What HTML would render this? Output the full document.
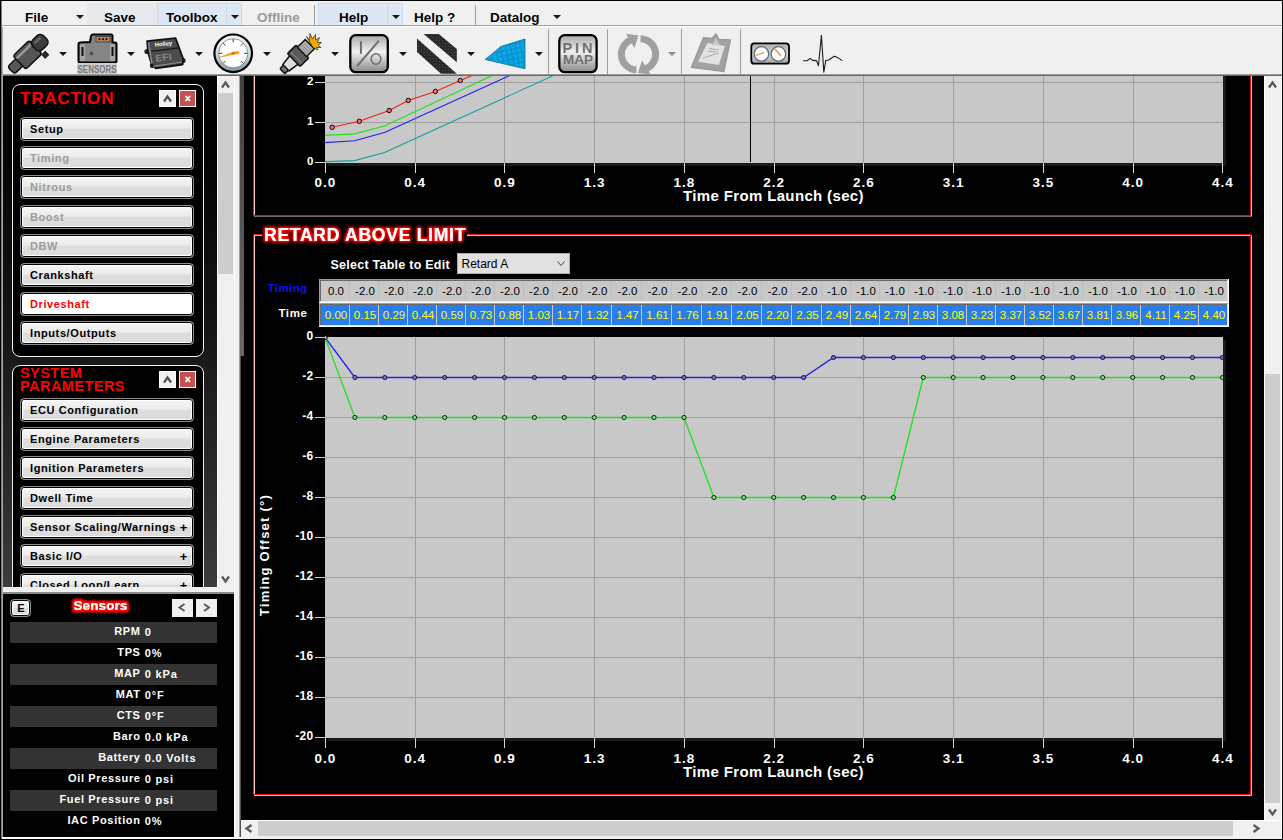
<!DOCTYPE html><html><head><meta charset="utf-8"><style>
*{margin:0;padding:0;box-sizing:border-box}
html,body{width:1283px;height:840px;overflow:hidden;background:#f0f0f0;font-family:"Liberation Sans",sans-serif}
.a{position:absolute}
.mt{position:absolute;top:10px;font-size:13.5px;font-weight:bold;color:#000;line-height:16px;white-space:nowrap}
.dd{position:absolute;width:0;height:0;border-left:4px solid transparent;border-right:4px solid transparent;border-top:4px solid #1a1a1a}
.btn{position:absolute;left:20px;width:174px;height:24px;border-radius:4px;border:1px solid #8c8c8c;
 background:linear-gradient(#f6f6f6 0%,#ececec 45%,#dddddd 52%,#dcdcdc 100%);box-shadow:inset 0 0 0 1px #000,inset 0 0 0 2px #fff;
 font-size:11px;font-weight:bold;color:#000;line-height:23px;padding-left:9px;white-space:nowrap;letter-spacing:0.6px}
.btn.dis{color:#9c9c9c}
.btn.sel{background:#fff;color:#f00}
.btn .pl{position:absolute;right:5px;top:0;font-size:13px}
.sr{position:absolute;left:10px;width:207px;height:21px;font-size:11px;font-weight:bold;color:#fff;line-height:21px;white-space:nowrap;letter-spacing:0.8px}
.sr.g{background:#333}
.sr .l{position:absolute;right:76.4px;top:-1.5px;text-align:right;letter-spacing:0.65px}
.sr .v{position:absolute;left:134.8px;top:0px}
</style></head><body>
<div class="a" style="left:0;top:0;width:1283px;height:1px;background:#000"></div>
<div class="a" style="left:0;top:0;width:1px;height:840px;background:#000"></div>
<div class="a" style="left:1px;top:1px;width:1px;height:839px;background:#2f8be0"></div>
<div class="a" style="left:1282px;top:0;width:1px;height:840px;background:#000"></div>
<div class="a" style="left:0;top:839px;width:1283px;height:1px;background:#000"></div>
<div class="a" style="left:2px;top:25px;width:1280px;height:1px;background:#a0a0a0"></div>
<div class="a" style="left:2px;top:26px;width:1280px;height:1px;background:#fff"></div>
<div class="a" style="left:87px;top:3px;width:70px;height:22px;background:#e6eaef"></div>
<div class="a" style="left:157px;top:3px;width:85px;height:22px;background:#dde8f4;border:1px solid #c6dcf0;border-bottom:none"></div>
<div class="a" style="left:226px;top:3px;width:1px;height:22px;background:#c6dcf0"></div>
<div class="a" style="left:318px;top:3px;width:85px;height:22px;background:#dde8f4;border:1px solid #c6dcf0;border-bottom:none"></div>
<div class="a" style="left:387px;top:3px;width:1px;height:22px;background:#c6dcf0"></div>
<div class="a" style="left:314px;top:5px;width:1px;height:20px;background:#a0a0a0"></div>
<div class="a" style="left:475px;top:5px;width:1px;height:20px;background:#a0a0a0"></div>
<div class="mt" style="left:25px;color:#000">File</div>
<div class="mt" style="left:104px;color:#000">Save</div>
<div class="mt" style="left:166px;color:#000">Toolbox</div>
<div class="mt" style="left:257px;color:#9a9a9a">Offline</div>
<div class="mt" style="left:339px;color:#000">Help</div>
<div class="mt" style="left:414px;color:#000">Help ?</div>
<div class="mt" style="left:490px;color:#000">Datalog</div>
<div class="dd" style="left:76px;top:15px"></div>
<div class="dd" style="left:231px;top:15px"></div>
<div class="dd" style="left:392px;top:15px"></div>
<div class="dd" style="left:553px;top:15px"></div>
<div class="a" style="left:2px;top:74px;width:1280px;height:1px;background:#9a9a9a"></div>
<div class="a" style="left:2px;top:75px;width:1280px;height:1px;background:#6a6a6a"></div>
<div class="dd" style="left:59px;top:52px;border-top-color:#1a1a1a"></div>
<div class="dd" style="left:127px;top:52px;border-top-color:#1a1a1a"></div>
<div class="dd" style="left:195px;top:52px;border-top-color:#1a1a1a"></div>
<div class="dd" style="left:263px;top:52px;border-top-color:#1a1a1a"></div>
<div class="dd" style="left:331px;top:52px;border-top-color:#1a1a1a"></div>
<div class="dd" style="left:399px;top:52px;border-top-color:#1a1a1a"></div>
<div class="dd" style="left:467px;top:52px;border-top-color:#1a1a1a"></div>
<div class="dd" style="left:535px;top:52px;border-top-color:#1a1a1a"></div>
<div class="dd" style="left:668px;top:52px;border-top-color:#8a8a8a"></div>
<div class="a" style="left:548px;top:29px;width:1px;height:45px;background:#a0a0a0"></div>
<div class="a" style="left:607px;top:29px;width:1px;height:45px;background:#a0a0a0"></div>
<div class="a" style="left:681px;top:29px;width:1px;height:45px;background:#a0a0a0"></div>
<div class="a" style="left:740px;top:29px;width:1px;height:45px;background:#a0a0a0"></div>
<svg class="a" style="left:0;top:27px" width="860" height="47" viewBox="0 27 860 47" font-family="Liberation Sans, sans-serif">
<defs>
<linearGradient id="gbtn" x1="0" y1="0" x2="0" y2="1"><stop offset="0" stop-color="#a8a8a8"/><stop offset="0.45" stop-color="#f2f2f2"/><stop offset="1" stop-color="#8a8a8a"/></linearGradient>
<linearGradient id="gbez" x1="0" y1="0" x2="0" y2="1"><stop offset="0" stop-color="#f4f6f7"/><stop offset="0.55" stop-color="#c9d6dc"/><stop offset="1" stop-color="#7d98a5"/></linearGradient>
<linearGradient id="gdual" x1="0" y1="0" x2="0" y2="1"><stop offset="0" stop-color="#a9abae"/><stop offset="0.5" stop-color="#d8d9da"/><stop offset="1" stop-color="#a0a2a4"/></linearGradient>
<pattern id="dots" width="3" height="3" patternUnits="userSpaceOnUse"><rect width="3" height="3" fill="#2a2a2a"/><rect x="1" y="1" width="1" height="1" fill="#4a4a4a"/></pattern>
<pattern id="bgrid" width="5" height="5" patternUnits="userSpaceOnUse" patternTransform="rotate(-12)"><rect width="5" height="5" fill="#0aa6e6"/><path d="M0,4.5H5M4.5,0V5" stroke="#0785bb" stroke-width="0.8"/></pattern>
</defs>
<g transform="translate(39.8,41.2) rotate(-44)" stroke="#111" stroke-width="1.5">
<rect x="-9" y="10" width="7" height="7" fill="#2a2a2a" stroke="#fff" stroke-width="1"/>
<rect x="-41" y="-4" width="13.5" height="10" rx="3" fill="#585858"/>
<rect x="-29.5" y="-8" width="22.5" height="18.5" rx="2.5" fill="#555"/>
<rect x="-28.5" y="-5" width="20" height="2.5" fill="#9a9a9a" stroke="none"/>
<rect x="-8.5" y="-5.8" width="15" height="13.6" rx="4.5" fill="#3c3c3c"/>
<rect x="-5" y="-3.5" width="8" height="2.5" fill="#6a6a6a" stroke="none"/>
</g>
<path d="M78.5,44 Q78.5,42.5 80,42.5 L90,42 L91,36 Q91.5,34.5 93,34.5 L111,34.5 Q112.5,34.5 112.5,36 L112.5,42.5 L115,42.5 Q116.5,42.5 116.5,44 L116.5,61 Q116.5,62.5 115,62.5 L80,62.5 Q78.5,62.5 78.5,61 Z" fill="#858585" stroke="#000" stroke-width="2"/>
<rect x="80" y="44" width="5" height="17" fill="#a4a4a4"/><rect x="110" y="44" width="5" height="17" fill="#a4a4a4"/>
<rect x="81.5" y="47" width="2" height="9" fill="#111"/><rect x="111.5" y="47" width="2" height="9" fill="#111"/>
<rect x="96" y="36.5" width="14" height="5.5" fill="#c8824a" stroke="#333" stroke-width="0.8"/>
<circle cx="99.5" cy="39.2" r="1.1" fill="#111"/><circle cx="103" cy="39.2" r="1.1" fill="#111"/><circle cx="106.5" cy="39.2" r="1.1" fill="#111"/>
<ellipse cx="91.5" cy="53.5" rx="1.5" ry="2" fill="#444"/>
<rect x="77" y="63" width="40" height="11" fill="#cdcdcd"/>
<text x="77.5" y="72.8" fill="#777" font-size="10" font-weight="bold" textLength="39" lengthAdjust="spacingAndGlyphs">SENSORS</text>
<circle cx="147" cy="51.5" r="2.6" fill="#222"/><circle cx="152.5" cy="65.5" r="2.6" fill="#222"/><circle cx="183" cy="60.5" r="2.6" fill="#222"/>
<path d="M147.1,41.2 L175.6,38.2 L183.3,59 L182.7,64.5 L155.9,68.3 L151.5,64 L148.2,53 Z" fill="#4c4c4c" stroke="#111" stroke-width="1.8" stroke-linejoin="round"/>
<path d="M148.5,42.5 L151.8,63.5" stroke="#8a8a8a" stroke-width="1.6"/>
<path d="M151.5,51.4 L178,48" stroke="#1a1a1a" stroke-width="1.3"/>
<path d="M153,66.3 L182,62" stroke="#8c8c8c" stroke-width="1.2"/>
<text transform="translate(155,46.8) rotate(-6)" fill="#fff" font-size="5.8" font-weight="bold">Holley</text>
<text transform="translate(156,61.8) rotate(-8)" fill="#8a8a8a" font-size="9.5" font-weight="bold" letter-spacing="0.6">EFI</text>
<circle cx="233.2" cy="53.3" r="18.8" fill="url(#gbez)" stroke="#000" stroke-width="2.2"/>
<circle cx="233.2" cy="53.3" r="14.6" fill="#fff" stroke="#555" stroke-width="0.6"/>
<line x1="223.2" y1="63.3" x2="225.4" y2="61.1" stroke="#333" stroke-width="1"/>
<line x1="219.0" y1="53.3" x2="222.2" y2="53.3" stroke="#333" stroke-width="1"/>
<line x1="223.2" y1="43.3" x2="225.4" y2="45.5" stroke="#333" stroke-width="1"/>
<line x1="233.2" y1="39.1" x2="233.2" y2="42.3" stroke="#333" stroke-width="1"/>
<line x1="243.2" y1="43.3" x2="241.0" y2="45.5" stroke="#333" stroke-width="1"/>
<line x1="247.4" y1="53.3" x2="244.2" y2="53.3" stroke="#333" stroke-width="1"/>
<line x1="243.2" y1="63.3" x2="241.0" y2="61.1" stroke="#333" stroke-width="1"/>
<path d="M219.5,57.5 L233,52 L239,51.5 L239,53.5 L233,54.5 Z" fill="#f0a020" stroke="#f0a020" stroke-width="0.6"/>
<circle cx="233.2" cy="53.3" r="1.6" fill="#d08010"/>
<g transform="translate(283.1,70.5) rotate(-44.5)" stroke="#111" stroke-width="1.5">
<rect x="-1" y="-3.5" width="6" height="7" rx="1.5" fill="#777"/>
<path d="M4,-4.5 L16,-6 L16,6 L4,4.5 Z" fill="#dcdcdc"/>
<rect x="15" y="-9" width="12" height="18" rx="1" fill="#5a5a5a"/>
<line x1="18.5" y1="-8" x2="18.5" y2="8" stroke="#9a9a9a" stroke-width="0.8"/>
<rect x="26.5" y="-6.5" width="11" height="13" fill="#b4b4b4"/>
<path d="M29,-5 V5 M31.5,-5 V5 M34,-5 V5" stroke="#777" stroke-width="0.8"/>
</g>
<path d="M306.5,36.5 L309.5,40.5 L310,33.5 L312.5,39 L315.5,34.5 L315.5,40 L319.5,37.5 L317.5,42.5 L321.5,42.5 L318,45.5 L321,47.5 L316.5,47.5 L318,50 L313,47.5 Z" fill="#f5a800" stroke="#222" stroke-width="0.7" stroke-linejoin="round"/>
<rect x="350.3" y="35.2" width="37.5" height="37" rx="5.5" fill="url(#gbtn)" stroke="#000" stroke-width="2.3"/>
<rect x="359.9" y="41.2" width="2" height="12.6" fill="#6c6c6c"/>
<line x1="357.2" y1="66" x2="379" y2="40.6" stroke="#707070" stroke-width="2"/>
<ellipse cx="376" cy="59" rx="4.8" ry="5.3" fill="none" stroke="#6c6c6c" stroke-width="1.5"/>
<path d="M417,38.5 L456.8,73.7 L441,73.7 L417,52 Z" fill="url(#dots)"/>
<path d="M423.6,34 L438.8,34 L456.8,49 L456.8,62.2 Z" fill="url(#dots)"/>
<path d="M485.2,59.5 L501,46.4 L525,39 L525,68.8 Z" fill="url(#bgrid)" stroke="#0b6f9c" stroke-width="0.8"/>
<rect x="559.3" y="35.2" width="37.3" height="37" rx="5.5" fill="url(#gbtn)" stroke="#000" stroke-width="2.3"/>
<text x="579" y="52.5" fill="#707070" font-size="14.5" font-weight="bold" text-anchor="middle" letter-spacing="3">PIN</text>
<text x="578" y="63.8" fill="#707070" font-size="13.5" font-weight="bold" text-anchor="middle" letter-spacing="0">MAP</text>
<g fill="none" stroke="#a0a0a0" stroke-width="7">
<path d="M636.5,69.9 A15.6,15.6 0 0 1 634.5,38.9"/>
<path d="M640.5,38.7 A15.6,15.6 0 0 1 642.5,69.7"/>
</g>
<path d="M626,33.8 L638.5,35.5 L634.5,48 Z" fill="#a0a0a0"/>
<path d="M650.5,74.5 L638,73 L642,60.5 Z" fill="#a0a0a0"/>
<path d="M703.5,37.7 L712,38.5 L716,34 L719,39.5 L730.4,40.1 L723.8,71.6 L691.5,67.2 Z" fill="#a2a2a2" stroke="#9a9a9a" stroke-width="1.5" stroke-linejoin="round"/>
<path d="M707.4,43.1 L724.9,45.9 L718.9,65 L698,61.8 Z" fill="#e2e2e2"/>
<path d="M712,45 L716,37.5 L720,45.5 Z" fill="#c8c8c8"/>
<path d="M709,48.5 L719,50 M708,51 L716,52 M703,58 L719,53" stroke="#aaa" stroke-width="1"/>
<rect x="751.3" y="43.4" width="37.7" height="20.3" rx="3" fill="url(#gdual)" stroke="#000" stroke-width="1.8"/>
<circle cx="761.4" cy="53.9" r="7.3" fill="#fff" stroke="#5a6e78" stroke-width="1.3"/>
<circle cx="778.4" cy="53.9" r="7.3" fill="#fff" stroke="#5a6e78" stroke-width="1.3"/>
<line x1="755.5" y1="55.5" x2="764" y2="52.5" stroke="#e09020" stroke-width="1.2"/>
<line x1="774.5" y1="48.5" x2="781" y2="56" stroke="#e09020" stroke-width="1.2"/>
<polyline points="803.1,60.8 807.2,60.8 810,58.4 812.5,60.4 816.5,60.6 818.5,65.7 821.4,35.3 823.8,72.1 825.8,60.4 828.7,60 834.3,56.3 837.6,57.6 842.4,60.6" fill="none" stroke="#1a1a1a" stroke-width="1.1" stroke-linejoin="round"/>
</svg>
<div class="a" style="left:2px;top:27px;width:1px;height:812px;background:#a8a8a8"></div>
<div class="a" style="left:3px;top:76px;width:214px;height:511px;background:linear-gradient(#000 0%,#080808 25%,#151515 50%,#272727 75%,#3c3c3c 100%)"></div>
<div class="a" style="left:217px;top:76px;width:1px;height:511px;background:#fff"></div>
<div class="a" style="left:218px;top:76px;width:16px;height:511px;background:#f0f0f0"></div>
<div class="a" style="left:218px;top:93px;width:15px;height:181px;background:#cdcdcd"></div>
<!--LSCROLL-->
<div class="a" style="left:234px;top:76px;width:1px;height:761px;background:#fff"></div>
<div class="a" style="left:235px;top:76px;width:4px;height:761px;background:#f0f0f0"></div>
<div class="a" style="left:239px;top:76px;width:1px;height:763px;background:#a0a0a0"></div>
<div class="a" style="left:240px;top:76px;width:1px;height:763px;background:#505050"></div>
<div class="a" style="left:12px;top:84px;width:192px;height:273px;border:1px solid #f0f0f0;border-radius:8px;background:#000"></div>
<div class="a" style="left:20px;top:89px;font-size:17px;font-weight:bold;color:#f00;letter-spacing:0.8px;line-height:20px">TRACTION</div>
<div class="a" style="left:159px;top:90px;width:17px;height:17px;background:#f0f0f0;border:1px solid #fff"></div>
<div class="a" style="left:179px;top:90px;width:17px;height:17px;background:#c65050;border:1px solid #fff"></div>
<div class="btn " style="top:117px">Setup</div>
<div class="btn dis" style="top:146px">Timing</div>
<div class="btn dis" style="top:175px">Nitrous</div>
<div class="btn dis" style="top:205px">Boost</div>
<div class="btn dis" style="top:234px">DBW</div>
<div class="btn " style="top:263px">Crankshaft</div>
<div class="btn sel" style="top:292px">Driveshaft</div>
<div class="btn " style="top:321px">Inputs/Outputs</div>
<div class="a" style="left:3px;top:76px;width:214px;height:511px;overflow:hidden">
<div class="a" style="left:9px;top:289px;width:192px;height:300px;border:1px solid #f0f0f0;border-radius:8px;background:#000"></div>
<div class="a" style="left:17px;top:291px;font-size:14.5px;font-weight:bold;color:#f00;line-height:12.8px;letter-spacing:0.45px">SYSTEM<br>PARAMETERS</div>
<div class="a" style="left:156px;top:295px;width:17px;height:17px;background:#f0f0f0;border:1px solid #fff"></div>
<div class="a" style="left:176px;top:295px;width:17px;height:17px;background:#c65050;border:1px solid #fff"></div>
<div class="btn" style="left:17px;top:322px">ECU Configuration</div>
<div class="btn" style="left:17px;top:351px">Engine Parameters</div>
<div class="btn" style="left:17px;top:380px">Ignition Parameters</div>
<div class="btn" style="left:17px;top:410px">Dwell Time</div>
<div class="btn" style="left:17px;top:439px">Sensor Scaling/Warnings<span class="pl">+</span></div>
<div class="btn" style="left:17px;top:468px">Basic I/O<span class="pl">+</span></div>
<div class="btn" style="left:17px;top:497px">Closed Loop/Learn<span class="pl">+</span></div>
</div>
<div class="a" style="left:3px;top:587px;width:231px;height:5px;background:#f0f0f0"></div>
<div class="a" style="left:3px;top:592px;width:231px;height:2px;background:#8a8a8a"></div>
<div class="a" style="left:3px;top:594px;width:231px;height:243px;background:#000"></div>
<div class="a" style="left:2px;top:837px;width:239px;height:2px;background:#fff"></div>
<div class="a" style="left:10px;top:599px;width:21px;height:18px;border:1px solid #8c8c8c;border-radius:4px;background:linear-gradient(#f8f8f8,#e8e8e8 50%,#dcdcdc 52%,#dcdcdc);box-shadow:inset 0 0 0 1px #000,inset 0 0 0 2px #fff;font-size:11px;font-weight:bold;text-align:center;line-height:17px;padding-left:1px">E</div>
<svg class="a" style="left:60px;top:592px" width="90" height="26" viewBox="60 592 90 26"><defs><filter id="sg" x="-20%" y="-60%" width="140%" height="220%"><feMorphology operator="dilate" radius="1.5" in="SourceAlpha" result="d"/><feGaussianBlur in="d" stdDeviation="1.3" result="b"/><feFlood flood-color="#ff0000"/><feComposite in2="b" operator="in" result="r"/><feMerge><feMergeNode in="r"/><feMergeNode in="r"/><feMergeNode in="SourceGraphic"/></feMerge></filter></defs><text x="73.5" y="609.7" fill="#fff" font-family="Liberation Sans, sans-serif" font-size="13.5" font-weight="bold" letter-spacing="0.1" filter="url(#sg)">Sensors</text></svg>
<div class="a" style="left:172px;top:599px;width:21px;height:18px;background:#f0f0f0"></div>
<div class="a" style="left:196px;top:599px;width:21px;height:18px;background:#f0f0f0"></div>
<!--SARROWS-->
<div class="sr g" style="top:622px"><span class="l">RPM</span><span class="v">0</span></div>
<div class="sr " style="top:643px"><span class="l">TPS</span><span class="v">0%</span></div>
<div class="sr g" style="top:664px"><span class="l">MAP</span><span class="v">0 kPa</span></div>
<div class="sr " style="top:685px"><span class="l">MAT</span><span class="v">0°F</span></div>
<div class="sr g" style="top:706px"><span class="l">CTS</span><span class="v">0°F</span></div>
<div class="sr " style="top:727px"><span class="l">Baro</span><span class="v">0.0 kPa</span></div>
<div class="sr g" style="top:748px"><span class="l">Battery</span><span class="v">0.0 Volts</span></div>
<div class="sr " style="top:769px"><span class="l">Oil Pressure</span><span class="v">0 psi</span></div>
<div class="sr g" style="top:790px"><span class="l">Fuel Pressure</span><span class="v">0 psi</span></div>
<div class="sr " style="top:811px"><span class="l">IAC Position</span><span class="v">0%</span></div>
<div class="a" style="left:241px;top:76px;width:1023px;height:744px;background:#000"></div>
<svg class="a" style="left:240px;top:76px" width="1024" height="744" viewBox="240 76 1024 744" font-family="Liberation Sans, sans-serif">
<defs><filter id="glow" x="-20%" y="-50%" width="140%" height="200%"><feMorphology operator="dilate" radius="1.2" in="SourceAlpha" result="d"/><feGaussianBlur in="d" stdDeviation="1.6" result="b"/><feFlood flood-color="#ff0000"/><feComposite in2="b" operator="in" result="r"/><feMerge><feMergeNode in="r"/><feMergeNode in="r"/><feMergeNode in="SourceGraphic"/></feMerge></filter></defs>
<linearGradient id="strip" x1="0" y1="0" x2="0" y2="1"><stop offset="0" stop-color="#404040"/><stop offset="1" stop-color="#686868"/></linearGradient><rect x="240" y="76" width="4" height="280" fill="url(#strip)"/>
<rect x="254.5" y="-10" width="997" height="226" fill="none" stroke="#ffc8c8" stroke-width="1"/>
<rect x="253.5" y="-11" width="997" height="226.5" fill="none" stroke="#ff0000" stroke-width="1"/>
<rect x="328" y="76" width="898" height="90" fill="#1a1a1a"/>
<rect x="325" y="76" width="898" height="87" fill="#c8c8c8"/>
<g stroke="#a0a0a0" stroke-width="1"><line x1="325" y1="82.5" x2="1223" y2="82.5"/><line x1="325" y1="122.5" x2="1223" y2="122.5"/><line x1="415.5" y1="76" x2="415.5" y2="163"/><line x1="504.5" y1="76" x2="504.5" y2="163"/><line x1="594.5" y1="76" x2="594.5" y2="163"/><line x1="684.5" y1="76" x2="684.5" y2="163"/><line x1="774.5" y1="76" x2="774.5" y2="163"/><line x1="863.5" y1="76" x2="863.5" y2="163"/><line x1="953.5" y1="76" x2="953.5" y2="163"/><line x1="1043.5" y1="76" x2="1043.5" y2="163"/><line x1="1133.5" y1="76" x2="1133.5" y2="163"/></g>
<g stroke="#d8d8d8" stroke-width="1"><line x1="315" y1="82.5" x2="325" y2="82.5"/><line x1="315" y1="122.5" x2="325" y2="122.5"/><line x1="315" y1="162.5" x2="325" y2="162.5"/><line x1="325.5" y1="163" x2="325.5" y2="173"/><line x1="415.5" y1="163" x2="415.5" y2="173"/><line x1="504.5" y1="163" x2="504.5" y2="173"/><line x1="594.5" y1="163" x2="594.5" y2="173"/><line x1="684.5" y1="163" x2="684.5" y2="173"/><line x1="774.5" y1="163" x2="774.5" y2="173"/><line x1="863.5" y1="163" x2="863.5" y2="173"/><line x1="953.5" y1="163" x2="953.5" y2="173"/><line x1="1043.5" y1="163" x2="1043.5" y2="173"/><line x1="1133.5" y1="163" x2="1133.5" y2="173"/><line x1="1222.5" y1="163" x2="1222.5" y2="173"/></g>
<text x="313.5" y="85" fill="#fff" font-size="11.5" font-weight="bold" text-anchor="end">2</text>
<text x="313.5" y="125" fill="#fff" font-size="11.5" font-weight="bold" text-anchor="end">1</text>
<text x="313.5" y="165" fill="#fff" font-size="11.5" font-weight="bold" text-anchor="end">0</text>
<text x="325.5" y="186.5" fill="#fff" font-size="13.5" font-weight="bold" text-anchor="middle" letter-spacing="1">0.0</text>
<text x="415.24" y="186.5" fill="#fff" font-size="13.5" font-weight="bold" text-anchor="middle" letter-spacing="1">0.4</text>
<text x="504.98" y="186.5" fill="#fff" font-size="13.5" font-weight="bold" text-anchor="middle" letter-spacing="1">0.9</text>
<text x="594.72" y="186.5" fill="#fff" font-size="13.5" font-weight="bold" text-anchor="middle" letter-spacing="1">1.3</text>
<text x="684.46" y="186.5" fill="#fff" font-size="13.5" font-weight="bold" text-anchor="middle" letter-spacing="1">1.8</text>
<text x="774.2" y="186.5" fill="#fff" font-size="13.5" font-weight="bold" text-anchor="middle" letter-spacing="1">2.2</text>
<text x="863.94" y="186.5" fill="#fff" font-size="13.5" font-weight="bold" text-anchor="middle" letter-spacing="1">2.6</text>
<text x="953.6800000000001" y="186.5" fill="#fff" font-size="13.5" font-weight="bold" text-anchor="middle" letter-spacing="1">3.1</text>
<text x="1043.42" y="186.5" fill="#fff" font-size="13.5" font-weight="bold" text-anchor="middle" letter-spacing="1">3.5</text>
<text x="1133.16" y="186.5" fill="#fff" font-size="13.5" font-weight="bold" text-anchor="middle" letter-spacing="1">4.0</text>
<text x="1222.9" y="186.5" fill="#fff" font-size="13.5" font-weight="bold" text-anchor="middle" letter-spacing="1">4.4</text>
<text x="773.5" y="200.8" fill="#fff" font-size="15" font-weight="bold" text-anchor="middle" letter-spacing="0.35">Time From Launch (sec)</text>
<clipPath id="c1"><rect x="325" y="76" width="898" height="87"/></clipPath>
<g clip-path="url(#c1)" fill="none" stroke-width="1.1">
<polyline stroke="#13a0a0" points="325,161.6 354.6,160.6 384.5,152.6 700,8.6"/>
<polyline stroke="#2020f0" points="325,142.6 354.6,140.8 384.5,132.5 700,-11"/>
<polyline stroke="#20e020" points="325,135.4 354.6,133.9 384.5,126 700,-22"/>
<polyline stroke="#f02020" points="332.2,127.3 359.3,121.3 389.2,110.5 408.3,100.4 435.4,91.4 460.3,80.5 490,68"/>
</g>
<circle cx="332.2" cy="127.3" r="2.2" fill="#f07070" stroke="#200000" stroke-width="1"/>
<circle cx="359.3" cy="121.3" r="2.2" fill="#f07070" stroke="#200000" stroke-width="1"/>
<circle cx="389.2" cy="110.5" r="2.2" fill="#f07070" stroke="#200000" stroke-width="1"/>
<circle cx="408.3" cy="100.4" r="2.2" fill="#f07070" stroke="#200000" stroke-width="1"/>
<circle cx="435.4" cy="91.4" r="2.2" fill="#f07070" stroke="#200000" stroke-width="1"/>
<circle cx="460.3" cy="80.5" r="2.2" fill="#f07070" stroke="#200000" stroke-width="1"/>
<line x1="750.5" y1="76" x2="750.5" y2="162" stroke="#000" stroke-width="1"/>
<path d="M262,235.5 H254.5 V795.5 H1251.5 V235.5 H467" fill="none" stroke="#ffc8c8" stroke-width="1"/>
<path d="M262,234.5 H253.5 V794.5 H1250.5 V234.5 H467" fill="none" stroke="#ff0000" stroke-width="1"/>
<text x="264" y="240.5" fill="#fff" font-size="17.5" font-weight="bold" letter-spacing="0.75" filter="url(#glow)">RETARD ABOVE LIMIT</text>
<text x="330.5" y="268.5" fill="#fff" font-size="12.5" font-weight="bold" letter-spacing="0.25">Select Table to Edit</text>
<rect x="457.5" y="253.5" width="112" height="20" fill="#e1e1e1" stroke="#adadad"/>
<text x="461.5" y="268" fill="#000" font-size="12">Retard A</text>
<polyline points="557.5,261.5 561,265.5 564.5,261.5" fill="none" stroke="#444" stroke-width="1"/>
<text x="307.5" y="292" fill="#1010f0" font-size="11.5" font-weight="bold" text-anchor="end" letter-spacing="0.4">Timing</text>
<text x="307.5" y="317" fill="#fff" font-size="11.5" font-weight="bold" text-anchor="end" letter-spacing="0.6">Time</text>
<rect x="319" y="279" width="910" height="24" fill="#fff"/>
<rect x="319" y="279" width="909" height="23" fill="#a0a0a0"/>
<rect x="320" y="280" width="908" height="22" fill="#e3e3e3"/>
<rect x="320" y="280" width="907" height="21" fill="#696969"/>
<rect x="321" y="281" width="906" height="20" fill="#bdbdbd"/>
<rect x="321" y="281" width="28" height="20" fill="#c8c8c8"/>
<text x="336.0" y="295" fill="#000" font-size="11.5" text-anchor="middle">0.0</text>
<rect x="350" y="281" width="28" height="20" fill="#c8c8c8"/>
<text x="365.0" y="295" fill="#000" font-size="11.5" text-anchor="middle">-2.0</text>
<rect x="379" y="281" width="28" height="20" fill="#c8c8c8"/>
<text x="394.0" y="295" fill="#000" font-size="11.5" text-anchor="middle">-2.0</text>
<rect x="408" y="281" width="28" height="20" fill="#c8c8c8"/>
<text x="423.0" y="295" fill="#000" font-size="11.5" text-anchor="middle">-2.0</text>
<rect x="437" y="281" width="28" height="20" fill="#c8c8c8"/>
<text x="452.0" y="295" fill="#000" font-size="11.5" text-anchor="middle">-2.0</text>
<rect x="466" y="281" width="28" height="20" fill="#c8c8c8"/>
<text x="481.0" y="295" fill="#000" font-size="11.5" text-anchor="middle">-2.0</text>
<rect x="495" y="281" width="28" height="20" fill="#c8c8c8"/>
<text x="510.0" y="295" fill="#000" font-size="11.5" text-anchor="middle">-2.0</text>
<rect x="524" y="281" width="28" height="20" fill="#c8c8c8"/>
<text x="539.0" y="295" fill="#000" font-size="11.5" text-anchor="middle">-2.0</text>
<rect x="553" y="281" width="28" height="20" fill="#c8c8c8"/>
<text x="568.0" y="295" fill="#000" font-size="11.5" text-anchor="middle">-2.0</text>
<rect x="582" y="281" width="29" height="20" fill="#c8c8c8"/>
<text x="597.5" y="295" fill="#000" font-size="11.5" text-anchor="middle">-2.0</text>
<rect x="612" y="281" width="29" height="20" fill="#c8c8c8"/>
<text x="627.5" y="295" fill="#000" font-size="11.5" text-anchor="middle">-2.0</text>
<rect x="642" y="281" width="29" height="20" fill="#c8c8c8"/>
<text x="657.5" y="295" fill="#000" font-size="11.5" text-anchor="middle">-2.0</text>
<rect x="672" y="281" width="29" height="20" fill="#c8c8c8"/>
<text x="687.5" y="295" fill="#000" font-size="11.5" text-anchor="middle">-2.0</text>
<rect x="702" y="281" width="29" height="20" fill="#c8c8c8"/>
<text x="717.5" y="295" fill="#000" font-size="11.5" text-anchor="middle">-2.0</text>
<rect x="732" y="281" width="29" height="20" fill="#c8c8c8"/>
<text x="747.5" y="295" fill="#000" font-size="11.5" text-anchor="middle">-2.0</text>
<rect x="762" y="281" width="29" height="20" fill="#c8c8c8"/>
<text x="777.5" y="295" fill="#000" font-size="11.5" text-anchor="middle">-2.0</text>
<rect x="792" y="281" width="29" height="20" fill="#c8c8c8"/>
<text x="807.5" y="295" fill="#000" font-size="11.5" text-anchor="middle">-2.0</text>
<rect x="822" y="281" width="28" height="20" fill="#c8c8c8"/>
<text x="837.0" y="295" fill="#000" font-size="11.5" text-anchor="middle">-1.0</text>
<rect x="851" y="281" width="28" height="20" fill="#c8c8c8"/>
<text x="866.0" y="295" fill="#000" font-size="11.5" text-anchor="middle">-1.0</text>
<rect x="880" y="281" width="28" height="20" fill="#c8c8c8"/>
<text x="895.0" y="295" fill="#000" font-size="11.5" text-anchor="middle">-1.0</text>
<rect x="909" y="281" width="28" height="20" fill="#c8c8c8"/>
<text x="924.0" y="295" fill="#000" font-size="11.5" text-anchor="middle">-1.0</text>
<rect x="938" y="281" width="28" height="20" fill="#c8c8c8"/>
<text x="953.0" y="295" fill="#000" font-size="11.5" text-anchor="middle">-1.0</text>
<rect x="967" y="281" width="28" height="20" fill="#c8c8c8"/>
<text x="982.0" y="295" fill="#000" font-size="11.5" text-anchor="middle">-1.0</text>
<rect x="996" y="281" width="28" height="20" fill="#c8c8c8"/>
<text x="1011.0" y="295" fill="#000" font-size="11.5" text-anchor="middle">-1.0</text>
<rect x="1025" y="281" width="28" height="20" fill="#c8c8c8"/>
<text x="1040.0" y="295" fill="#000" font-size="11.5" text-anchor="middle">-1.0</text>
<rect x="1054" y="281" width="28" height="20" fill="#c8c8c8"/>
<text x="1069.0" y="295" fill="#000" font-size="11.5" text-anchor="middle">-1.0</text>
<rect x="1083" y="281" width="28" height="20" fill="#c8c8c8"/>
<text x="1098.0" y="295" fill="#000" font-size="11.5" text-anchor="middle">-1.0</text>
<rect x="1112" y="281" width="28" height="20" fill="#c8c8c8"/>
<text x="1127.0" y="295" fill="#000" font-size="11.5" text-anchor="middle">-1.0</text>
<rect x="1141" y="281" width="28" height="20" fill="#c8c8c8"/>
<text x="1156.0" y="295" fill="#000" font-size="11.5" text-anchor="middle">-1.0</text>
<rect x="1170" y="281" width="28" height="20" fill="#c8c8c8"/>
<text x="1185.0" y="295" fill="#000" font-size="11.5" text-anchor="middle">-1.0</text>
<rect x="1199" y="281" width="28" height="20" fill="#c8c8c8"/>
<text x="1214.0" y="295" fill="#000" font-size="11.5" text-anchor="middle">-1.0</text>
<rect x="319" y="303" width="910" height="24" fill="#fff"/>
<rect x="319" y="303" width="909" height="23" fill="#a0a0a0"/>
<rect x="320" y="304" width="908" height="22" fill="#e3e3e3"/>
<rect x="320" y="304" width="907" height="21" fill="#696969"/>
<rect x="321" y="305" width="906" height="20" fill="#c8c8c8"/>
<rect x="321" y="305" width="28" height="20" fill="#2b7de9"/>
<text x="336.0" y="319" fill="#ffff00" font-size="11.5" text-anchor="middle">0.00</text>
<rect x="350" y="305" width="28" height="20" fill="#2b7de9"/>
<text x="365.0" y="319" fill="#ffff00" font-size="11.5" text-anchor="middle">0.15</text>
<rect x="379" y="305" width="28" height="20" fill="#2b7de9"/>
<text x="394.0" y="319" fill="#ffff00" font-size="11.5" text-anchor="middle">0.29</text>
<rect x="408" y="305" width="28" height="20" fill="#2b7de9"/>
<text x="423.0" y="319" fill="#ffff00" font-size="11.5" text-anchor="middle">0.44</text>
<rect x="437" y="305" width="28" height="20" fill="#2b7de9"/>
<text x="452.0" y="319" fill="#ffff00" font-size="11.5" text-anchor="middle">0.59</text>
<rect x="466" y="305" width="28" height="20" fill="#2b7de9"/>
<text x="481.0" y="319" fill="#ffff00" font-size="11.5" text-anchor="middle">0.73</text>
<rect x="495" y="305" width="28" height="20" fill="#2b7de9"/>
<text x="510.0" y="319" fill="#ffff00" font-size="11.5" text-anchor="middle">0.88</text>
<rect x="524" y="305" width="28" height="20" fill="#2b7de9"/>
<text x="539.0" y="319" fill="#ffff00" font-size="11.5" text-anchor="middle">1.03</text>
<rect x="553" y="305" width="28" height="20" fill="#2b7de9"/>
<text x="568.0" y="319" fill="#ffff00" font-size="11.5" text-anchor="middle">1.17</text>
<rect x="582" y="305" width="29" height="20" fill="#2b7de9"/>
<text x="597.5" y="319" fill="#ffff00" font-size="11.5" text-anchor="middle">1.32</text>
<rect x="612" y="305" width="29" height="20" fill="#2b7de9"/>
<text x="627.5" y="319" fill="#ffff00" font-size="11.5" text-anchor="middle">1.47</text>
<rect x="642" y="305" width="29" height="20" fill="#2b7de9"/>
<text x="657.5" y="319" fill="#ffff00" font-size="11.5" text-anchor="middle">1.61</text>
<rect x="672" y="305" width="29" height="20" fill="#2b7de9"/>
<text x="687.5" y="319" fill="#ffff00" font-size="11.5" text-anchor="middle">1.76</text>
<rect x="702" y="305" width="29" height="20" fill="#2b7de9"/>
<text x="717.5" y="319" fill="#ffff00" font-size="11.5" text-anchor="middle">1.91</text>
<rect x="732" y="305" width="29" height="20" fill="#2b7de9"/>
<text x="747.5" y="319" fill="#ffff00" font-size="11.5" text-anchor="middle">2.05</text>
<rect x="762" y="305" width="29" height="20" fill="#2b7de9"/>
<text x="777.5" y="319" fill="#ffff00" font-size="11.5" text-anchor="middle">2.20</text>
<rect x="792" y="305" width="29" height="20" fill="#2b7de9"/>
<text x="807.5" y="319" fill="#ffff00" font-size="11.5" text-anchor="middle">2.35</text>
<rect x="822" y="305" width="28" height="20" fill="#2b7de9"/>
<text x="837.0" y="319" fill="#ffff00" font-size="11.5" text-anchor="middle">2.49</text>
<rect x="851" y="305" width="28" height="20" fill="#2b7de9"/>
<text x="866.0" y="319" fill="#ffff00" font-size="11.5" text-anchor="middle">2.64</text>
<rect x="880" y="305" width="28" height="20" fill="#2b7de9"/>
<text x="895.0" y="319" fill="#ffff00" font-size="11.5" text-anchor="middle">2.79</text>
<rect x="909" y="305" width="28" height="20" fill="#2b7de9"/>
<text x="924.0" y="319" fill="#ffff00" font-size="11.5" text-anchor="middle">2.93</text>
<rect x="938" y="305" width="28" height="20" fill="#2b7de9"/>
<text x="953.0" y="319" fill="#ffff00" font-size="11.5" text-anchor="middle">3.08</text>
<rect x="967" y="305" width="28" height="20" fill="#2b7de9"/>
<text x="982.0" y="319" fill="#ffff00" font-size="11.5" text-anchor="middle">3.23</text>
<rect x="996" y="305" width="28" height="20" fill="#2b7de9"/>
<text x="1011.0" y="319" fill="#ffff00" font-size="11.5" text-anchor="middle">3.37</text>
<rect x="1025" y="305" width="28" height="20" fill="#2b7de9"/>
<text x="1040.0" y="319" fill="#ffff00" font-size="11.5" text-anchor="middle">3.52</text>
<rect x="1054" y="305" width="28" height="20" fill="#2b7de9"/>
<text x="1069.0" y="319" fill="#ffff00" font-size="11.5" text-anchor="middle">3.67</text>
<rect x="1083" y="305" width="28" height="20" fill="#2b7de9"/>
<text x="1098.0" y="319" fill="#ffff00" font-size="11.5" text-anchor="middle">3.81</text>
<rect x="1112" y="305" width="28" height="20" fill="#2b7de9"/>
<text x="1127.0" y="319" fill="#ffff00" font-size="11.5" text-anchor="middle">3.96</text>
<rect x="1141" y="305" width="28" height="20" fill="#2b7de9"/>
<text x="1156.0" y="319" fill="#ffff00" font-size="11.5" text-anchor="middle">4.11</text>
<rect x="1170" y="305" width="28" height="20" fill="#2b7de9"/>
<text x="1185.0" y="319" fill="#ffff00" font-size="11.5" text-anchor="middle">4.25</text>
<rect x="1199" y="305" width="28" height="20" fill="#2b7de9"/>
<text x="1214.0" y="319" fill="#ffff00" font-size="11.5" text-anchor="middle">4.40</text>
<rect x="328" y="340" width="898" height="401" fill="#1a1a1a"/>
<rect x="325" y="337" width="898" height="401" fill="#c8c8c8"/>
<g stroke="#a0a0a0" stroke-width="1"><line x1="325" y1="377.5" x2="1223" y2="377.5"/><line x1="325" y1="417.5" x2="1223" y2="417.5"/><line x1="325" y1="457.5" x2="1223" y2="457.5"/><line x1="325" y1="497.5" x2="1223" y2="497.5"/><line x1="325" y1="537.5" x2="1223" y2="537.5"/><line x1="325" y1="577.5" x2="1223" y2="577.5"/><line x1="325" y1="617.5" x2="1223" y2="617.5"/><line x1="325" y1="657.5" x2="1223" y2="657.5"/><line x1="325" y1="697.5" x2="1223" y2="697.5"/><line x1="415.5" y1="337" x2="415.5" y2="738"/><line x1="504.5" y1="337" x2="504.5" y2="738"/><line x1="594.5" y1="337" x2="594.5" y2="738"/><line x1="684.5" y1="337" x2="684.5" y2="738"/><line x1="774.5" y1="337" x2="774.5" y2="738"/><line x1="863.5" y1="337" x2="863.5" y2="738"/><line x1="953.5" y1="337" x2="953.5" y2="738"/><line x1="1043.5" y1="337" x2="1043.5" y2="738"/><line x1="1133.5" y1="337" x2="1133.5" y2="738"/></g>
<g stroke="#d0d0d0" stroke-width="1"><line x1="315" y1="337.5" x2="325" y2="337.5"/><line x1="315" y1="377.5" x2="325" y2="377.5"/><line x1="315" y1="417.5" x2="325" y2="417.5"/><line x1="315" y1="457.5" x2="325" y2="457.5"/><line x1="315" y1="497.5" x2="325" y2="497.5"/><line x1="315" y1="537.5" x2="325" y2="537.5"/><line x1="315" y1="577.5" x2="325" y2="577.5"/><line x1="315" y1="617.5" x2="325" y2="617.5"/><line x1="315" y1="657.5" x2="325" y2="657.5"/><line x1="315" y1="697.5" x2="325" y2="697.5"/><line x1="315" y1="737.5" x2="325" y2="737.5"/><line x1="325.5" y1="738" x2="325.5" y2="748"/><line x1="415.5" y1="738" x2="415.5" y2="748"/><line x1="504.5" y1="738" x2="504.5" y2="748"/><line x1="594.5" y1="738" x2="594.5" y2="748"/><line x1="684.5" y1="738" x2="684.5" y2="748"/><line x1="774.5" y1="738" x2="774.5" y2="748"/><line x1="863.5" y1="738" x2="863.5" y2="748"/><line x1="953.5" y1="738" x2="953.5" y2="748"/><line x1="1043.5" y1="738" x2="1043.5" y2="748"/><line x1="1133.5" y1="738" x2="1133.5" y2="748"/><line x1="1222.5" y1="738" x2="1222.5" y2="748"/></g>
<text x="313.5" y="340.0" fill="#fff" font-size="12" font-weight="bold" text-anchor="end" letter-spacing="0.3">0</text>
<text x="313.5" y="380.0" fill="#fff" font-size="12" font-weight="bold" text-anchor="end" letter-spacing="0.3">-2</text>
<text x="313.5" y="420.0" fill="#fff" font-size="12" font-weight="bold" text-anchor="end" letter-spacing="0.3">-4</text>
<text x="313.5" y="460.0" fill="#fff" font-size="12" font-weight="bold" text-anchor="end" letter-spacing="0.3">-6</text>
<text x="313.5" y="500.0" fill="#fff" font-size="12" font-weight="bold" text-anchor="end" letter-spacing="0.3">-8</text>
<text x="313.5" y="540.0" fill="#fff" font-size="12" font-weight="bold" text-anchor="end" letter-spacing="0.3">-10</text>
<text x="313.5" y="580.0" fill="#fff" font-size="12" font-weight="bold" text-anchor="end" letter-spacing="0.3">-12</text>
<text x="313.5" y="620.0" fill="#fff" font-size="12" font-weight="bold" text-anchor="end" letter-spacing="0.3">-14</text>
<text x="313.5" y="660.0" fill="#fff" font-size="12" font-weight="bold" text-anchor="end" letter-spacing="0.3">-16</text>
<text x="313.5" y="700.0" fill="#fff" font-size="12" font-weight="bold" text-anchor="end" letter-spacing="0.3">-18</text>
<text x="313.5" y="740.0" fill="#fff" font-size="12" font-weight="bold" text-anchor="end" letter-spacing="0.3">-20</text>
<text x="325.5" y="762.5" fill="#fff" font-size="13.5" font-weight="bold" text-anchor="middle" letter-spacing="1">0.0</text>
<text x="415.24" y="762.5" fill="#fff" font-size="13.5" font-weight="bold" text-anchor="middle" letter-spacing="1">0.4</text>
<text x="504.98" y="762.5" fill="#fff" font-size="13.5" font-weight="bold" text-anchor="middle" letter-spacing="1">0.9</text>
<text x="594.72" y="762.5" fill="#fff" font-size="13.5" font-weight="bold" text-anchor="middle" letter-spacing="1">1.3</text>
<text x="684.46" y="762.5" fill="#fff" font-size="13.5" font-weight="bold" text-anchor="middle" letter-spacing="1">1.8</text>
<text x="774.2" y="762.5" fill="#fff" font-size="13.5" font-weight="bold" text-anchor="middle" letter-spacing="1">2.2</text>
<text x="863.94" y="762.5" fill="#fff" font-size="13.5" font-weight="bold" text-anchor="middle" letter-spacing="1">2.6</text>
<text x="953.6800000000001" y="762.5" fill="#fff" font-size="13.5" font-weight="bold" text-anchor="middle" letter-spacing="1">3.1</text>
<text x="1043.42" y="762.5" fill="#fff" font-size="13.5" font-weight="bold" text-anchor="middle" letter-spacing="1">3.5</text>
<text x="1133.16" y="762.5" fill="#fff" font-size="13.5" font-weight="bold" text-anchor="middle" letter-spacing="1">4.0</text>
<text x="1222.9" y="762.5" fill="#fff" font-size="13.5" font-weight="bold" text-anchor="middle" letter-spacing="1">4.4</text>
<text x="773.5" y="776.8" fill="#fff" font-size="15" font-weight="bold" text-anchor="middle" letter-spacing="0.35">Time From Launch (sec)</text>
<text transform="translate(269,555) rotate(-90)" x="0" y="0" fill="#fff" font-size="13" font-weight="bold" text-anchor="middle" letter-spacing="1.25">Timing Offset (°)</text>
<clipPath id="c2"><rect x="325" y="330" width="898" height="408"/></clipPath><g clip-path="url(#c2)">
<polyline points="325.0,337.5 354.9,377.5 384.8,377.5 414.7,377.5 444.7,377.5 474.6,377.5 504.5,377.5 534.4,377.5 564.3,377.5 594.2,377.5 624.1,377.5 654.0,377.5 684.0,377.5 713.9,377.5 743.8,377.5 773.7,377.5 803.6,377.5 833.5,357.5 863.4,357.5 893.4,357.5 923.3,357.5 953.2,357.5 983.1,357.5 1013.0,357.5 1042.9,357.5 1072.8,357.5 1102.7,357.5 1132.7,357.5 1162.6,357.5 1192.5,357.5 1222.4,357.5" fill="none" stroke="#2020f0" stroke-width="1.3"/>
<polyline points="325.0,337.5 354.9,417.5 384.8,417.5 414.7,417.5 444.7,417.5 474.6,417.5 504.5,417.5 534.4,417.5 564.3,417.5 594.2,417.5 624.1,417.5 654.0,417.5 684.0,417.5 713.9,497.5 743.8,497.5 773.7,497.5 803.6,497.5 833.5,497.5 863.4,497.5 893.4,497.5 923.3,377.5 953.2,377.5 983.1,377.5 1013.0,377.5 1042.9,377.5 1072.8,377.5 1102.7,377.5 1132.7,377.5 1162.6,377.5 1192.5,377.5 1222.4,377.5" fill="none" stroke="#20e020" stroke-width="1.3"/>
<circle cx="325.0" cy="337.5" r="2.1" fill="#6a6af2" stroke="#101010" stroke-width="0.9"/>
<circle cx="354.9" cy="377.5" r="2.1" fill="#6a6af2" stroke="#101010" stroke-width="0.9"/>
<circle cx="384.8" cy="377.5" r="2.1" fill="#6a6af2" stroke="#101010" stroke-width="0.9"/>
<circle cx="414.7" cy="377.5" r="2.1" fill="#6a6af2" stroke="#101010" stroke-width="0.9"/>
<circle cx="444.7" cy="377.5" r="2.1" fill="#6a6af2" stroke="#101010" stroke-width="0.9"/>
<circle cx="474.6" cy="377.5" r="2.1" fill="#6a6af2" stroke="#101010" stroke-width="0.9"/>
<circle cx="504.5" cy="377.5" r="2.1" fill="#6a6af2" stroke="#101010" stroke-width="0.9"/>
<circle cx="534.4" cy="377.5" r="2.1" fill="#6a6af2" stroke="#101010" stroke-width="0.9"/>
<circle cx="564.3" cy="377.5" r="2.1" fill="#6a6af2" stroke="#101010" stroke-width="0.9"/>
<circle cx="594.2" cy="377.5" r="2.1" fill="#6a6af2" stroke="#101010" stroke-width="0.9"/>
<circle cx="624.1" cy="377.5" r="2.1" fill="#6a6af2" stroke="#101010" stroke-width="0.9"/>
<circle cx="654.0" cy="377.5" r="2.1" fill="#6a6af2" stroke="#101010" stroke-width="0.9"/>
<circle cx="684.0" cy="377.5" r="2.1" fill="#6a6af2" stroke="#101010" stroke-width="0.9"/>
<circle cx="713.9" cy="377.5" r="2.1" fill="#6a6af2" stroke="#101010" stroke-width="0.9"/>
<circle cx="743.8" cy="377.5" r="2.1" fill="#6a6af2" stroke="#101010" stroke-width="0.9"/>
<circle cx="773.7" cy="377.5" r="2.1" fill="#6a6af2" stroke="#101010" stroke-width="0.9"/>
<circle cx="803.6" cy="377.5" r="2.1" fill="#6a6af2" stroke="#101010" stroke-width="0.9"/>
<circle cx="833.5" cy="357.5" r="2.1" fill="#6a6af2" stroke="#101010" stroke-width="0.9"/>
<circle cx="863.4" cy="357.5" r="2.1" fill="#6a6af2" stroke="#101010" stroke-width="0.9"/>
<circle cx="893.4" cy="357.5" r="2.1" fill="#6a6af2" stroke="#101010" stroke-width="0.9"/>
<circle cx="923.3" cy="357.5" r="2.1" fill="#6a6af2" stroke="#101010" stroke-width="0.9"/>
<circle cx="953.2" cy="357.5" r="2.1" fill="#6a6af2" stroke="#101010" stroke-width="0.9"/>
<circle cx="983.1" cy="357.5" r="2.1" fill="#6a6af2" stroke="#101010" stroke-width="0.9"/>
<circle cx="1013.0" cy="357.5" r="2.1" fill="#6a6af2" stroke="#101010" stroke-width="0.9"/>
<circle cx="1042.9" cy="357.5" r="2.1" fill="#6a6af2" stroke="#101010" stroke-width="0.9"/>
<circle cx="1072.8" cy="357.5" r="2.1" fill="#6a6af2" stroke="#101010" stroke-width="0.9"/>
<circle cx="1102.7" cy="357.5" r="2.1" fill="#6a6af2" stroke="#101010" stroke-width="0.9"/>
<circle cx="1132.7" cy="357.5" r="2.1" fill="#6a6af2" stroke="#101010" stroke-width="0.9"/>
<circle cx="1162.6" cy="357.5" r="2.1" fill="#6a6af2" stroke="#101010" stroke-width="0.9"/>
<circle cx="1192.5" cy="357.5" r="2.1" fill="#6a6af2" stroke="#101010" stroke-width="0.9"/>
<circle cx="1222.4" cy="357.5" r="2.1" fill="#6a6af2" stroke="#101010" stroke-width="0.9"/>
<circle cx="325.0" cy="337.5" r="2.1" fill="#66ea66" stroke="#101010" stroke-width="0.9"/>
<circle cx="354.9" cy="417.5" r="2.1" fill="#66ea66" stroke="#101010" stroke-width="0.9"/>
<circle cx="384.8" cy="417.5" r="2.1" fill="#66ea66" stroke="#101010" stroke-width="0.9"/>
<circle cx="414.7" cy="417.5" r="2.1" fill="#66ea66" stroke="#101010" stroke-width="0.9"/>
<circle cx="444.7" cy="417.5" r="2.1" fill="#66ea66" stroke="#101010" stroke-width="0.9"/>
<circle cx="474.6" cy="417.5" r="2.1" fill="#66ea66" stroke="#101010" stroke-width="0.9"/>
<circle cx="504.5" cy="417.5" r="2.1" fill="#66ea66" stroke="#101010" stroke-width="0.9"/>
<circle cx="534.4" cy="417.5" r="2.1" fill="#66ea66" stroke="#101010" stroke-width="0.9"/>
<circle cx="564.3" cy="417.5" r="2.1" fill="#66ea66" stroke="#101010" stroke-width="0.9"/>
<circle cx="594.2" cy="417.5" r="2.1" fill="#66ea66" stroke="#101010" stroke-width="0.9"/>
<circle cx="624.1" cy="417.5" r="2.1" fill="#66ea66" stroke="#101010" stroke-width="0.9"/>
<circle cx="654.0" cy="417.5" r="2.1" fill="#66ea66" stroke="#101010" stroke-width="0.9"/>
<circle cx="684.0" cy="417.5" r="2.1" fill="#66ea66" stroke="#101010" stroke-width="0.9"/>
<circle cx="713.9" cy="497.5" r="2.1" fill="#66ea66" stroke="#101010" stroke-width="0.9"/>
<circle cx="743.8" cy="497.5" r="2.1" fill="#66ea66" stroke="#101010" stroke-width="0.9"/>
<circle cx="773.7" cy="497.5" r="2.1" fill="#66ea66" stroke="#101010" stroke-width="0.9"/>
<circle cx="803.6" cy="497.5" r="2.1" fill="#66ea66" stroke="#101010" stroke-width="0.9"/>
<circle cx="833.5" cy="497.5" r="2.1" fill="#66ea66" stroke="#101010" stroke-width="0.9"/>
<circle cx="863.4" cy="497.5" r="2.1" fill="#66ea66" stroke="#101010" stroke-width="0.9"/>
<circle cx="893.4" cy="497.5" r="2.1" fill="#66ea66" stroke="#101010" stroke-width="0.9"/>
<circle cx="923.3" cy="377.5" r="2.1" fill="#66ea66" stroke="#101010" stroke-width="0.9"/>
<circle cx="953.2" cy="377.5" r="2.1" fill="#66ea66" stroke="#101010" stroke-width="0.9"/>
<circle cx="983.1" cy="377.5" r="2.1" fill="#66ea66" stroke="#101010" stroke-width="0.9"/>
<circle cx="1013.0" cy="377.5" r="2.1" fill="#66ea66" stroke="#101010" stroke-width="0.9"/>
<circle cx="1042.9" cy="377.5" r="2.1" fill="#66ea66" stroke="#101010" stroke-width="0.9"/>
<circle cx="1072.8" cy="377.5" r="2.1" fill="#66ea66" stroke="#101010" stroke-width="0.9"/>
<circle cx="1102.7" cy="377.5" r="2.1" fill="#66ea66" stroke="#101010" stroke-width="0.9"/>
<circle cx="1132.7" cy="377.5" r="2.1" fill="#66ea66" stroke="#101010" stroke-width="0.9"/>
<circle cx="1162.6" cy="377.5" r="2.1" fill="#66ea66" stroke="#101010" stroke-width="0.9"/>
<circle cx="1192.5" cy="377.5" r="2.1" fill="#66ea66" stroke="#101010" stroke-width="0.9"/>
<circle cx="1222.4" cy="377.5" r="2.1" fill="#66ea66" stroke="#101010" stroke-width="0.9"/>
</g>
</svg>
<div class="a" style="left:1264px;top:76px;width:1px;height:745px;background:#fff"></div>
<div class="a" style="left:1265px;top:76px;width:16px;height:745px;background:#f0f0f0"></div>
<div class="a" style="left:1265px;top:374px;width:15px;height:429px;background:#cdcdcd"></div>
<div class="a" style="left:1281px;top:76px;width:1px;height:763px;background:#fff"></div>
<div class="a" style="left:241px;top:820px;width:1041px;height:1px;background:#fff"></div>
<div class="a" style="left:241px;top:821px;width:1040px;height:16px;background:#f0f0f0"></div>
<div class="a" style="left:258px;top:821px;width:975px;height:15px;background:#cdcdcd"></div>
<!--SCROLLARROWS-->
<svg class="a" style="left:0;top:0" width="1283" height="840">
<polyline points="222,87.5 225.5,82.5 229,87.5" fill="none" stroke="#5a5a5a" stroke-width="2.3" stroke-linecap="butt" stroke-linejoin="miter"/>
<polyline points="222,576.5 225.5,581.5 229,576.5" fill="none" stroke="#5a5a5a" stroke-width="2.3" stroke-linecap="butt" stroke-linejoin="miter"/>
<polyline points="1269,87.5 1272.5,82.5 1276,87.5" fill="none" stroke="#5a5a5a" stroke-width="2.3" stroke-linecap="butt" stroke-linejoin="miter"/>
<polyline points="1269,809.5 1272.5,814.5 1276,809.5" fill="none" stroke="#5a5a5a" stroke-width="2.3" stroke-linecap="butt" stroke-linejoin="miter"/>
<polyline points="251.5,825 246.5,828.5 251.5,832" fill="none" stroke="#5a5a5a" stroke-width="2.3" stroke-linecap="butt" stroke-linejoin="miter"/>
<polyline points="1253.5,825 1258.5,828.5 1253.5,832" fill="none" stroke="#5a5a5a" stroke-width="2.3" stroke-linecap="butt" stroke-linejoin="miter"/>
<polyline points="184.5,604 179.5,607.5 184.5,611" fill="none" stroke="#5a5a5a" stroke-width="2" stroke-linecap="butt" stroke-linejoin="miter"/>
<polyline points="204,604 209,607.5 204,611" fill="none" stroke="#5a5a5a" stroke-width="2" stroke-linecap="butt" stroke-linejoin="miter"/>
<polyline points="164,101.5 167.5,96.5 171,101.5" fill="none" stroke="#505050" stroke-width="2.2" stroke-linecap="butt" stroke-linejoin="miter"/>
<polyline points="164,382.5 167.5,377.5 171,382.5" fill="none" stroke="#505050" stroke-width="2.2" stroke-linecap="butt" stroke-linejoin="miter"/>
<path d="M185.5,96 L190,101 M190,96 L185.5,101" stroke="#fff" stroke-width="1.8"/>
<path d="M185.5,377 L190,382 M190,377 L185.5,382" stroke="#fff" stroke-width="1.8"/>
</svg>
</body></html>
